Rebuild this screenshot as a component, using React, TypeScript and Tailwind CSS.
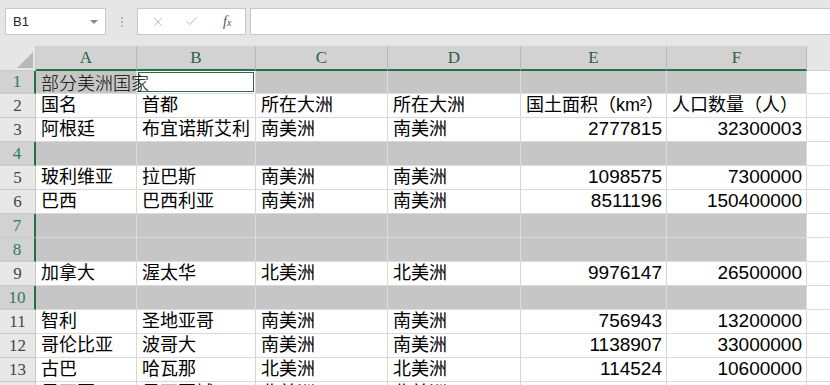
import { X, Check } from "lucide-react";

const cols = [
  { key: "A", w: "w-[101px]" },
  { key: "B", w: "w-[119px]" },
  { key: "C", w: "w-[132px]" },
  { key: "D", w: "w-[133px]" },
  { key: "E", w: "w-[146px]" },
  { key: "F", w: "w-[140px]" },
];

type Row = { n: number; sel?: boolean; cells?: string[] };

const rows: Row[] = [
  { n: 2, cells: ["国名", "首都", "所在大洲", "所在大洲", "国土面积（km²）", "人口数量（人）"] },
  { n: 3, cells: ["阿根廷", "布宜诺斯艾利", "南美洲", "南美洲", "2777815", "32300003"] },
  { n: 4, sel: true },
  { n: 5, cells: ["玻利维亚", "拉巴斯", "南美洲", "南美洲", "1098575", "7300000"] },
  { n: 6, cells: ["巴西", "巴西利亚", "南美洲", "南美洲", "8511196", "150400000"] },
  { n: 7, sel: true },
  { n: 8, sel: true },
  { n: 9, cells: ["加拿大", "渥太华", "北美洲", "北美洲", "9976147", "26500000"] },
  { n: 10, sel: true },
  { n: 11, cells: ["智利", "圣地亚哥", "南美洲", "南美洲", "756943", "13200000"] },
  { n: 12, cells: ["哥伦比亚", "波哥大", "南美洲", "南美洲", "1138907", "33000000"] },
  { n: 13, cells: ["古巴", "哈瓦那", "北美洲", "北美洲", "114524", "10600000"] },
  { n: 14, cells: ["墨西哥", "墨西哥城", "北美洲", "北美洲", "1964375", "119500000"] },
];

const isNum = (s: string) => /^\d+$/.test(s);

const RowHeader = ({ n, sel }: { n: number; sel?: boolean }) => (
  <div
    className={
      "w-[36px] shrink-0 flex items-center justify-center border-b border-[#c8c8c8] font-['Liberation_Serif',serif] text-[17px] " +
      (sel
        ? "bg-[#d2d2d2] text-[#2f7a5a] border-r-2 border-r-[#217346]"
        : "bg-[#e8e8e8] text-[#444] border-r border-r-[#c8c8c8]")
    }
  >
    {n}
  </div>
);

const Toolbar = () => (
  <div className="h-[46px] bg-[#e6e6e6] flex items-start pt-[8px] pl-[5px]">
    <div className="w-[101px] h-[27px] bg-white border border-[#c6c6c6] flex items-center justify-between px-[7px] font-['Liberation_Sans',sans-serif] text-[13px] text-[#222]">
      <span>B1</span>
      <span className="w-0 h-0 border-l-[4px] border-r-[4px] border-t-[4px] border-l-transparent border-r-transparent border-t-[#888]" />
    </div>
    <div className="w-[31px] h-[27px] flex flex-col items-center justify-center gap-[2px]">
      <span className="w-[2px] h-[2px] bg-[#b4b4b4]" />
      <span className="w-[2px] h-[2px] bg-[#b4b4b4]" />
      <span className="w-[2px] h-[2px] bg-[#b4b4b4]" />
    </div>
    <div className="w-[109px] h-[27px] bg-white border border-[#c6c6c6] flex items-center pl-[13px]">
      <X className="w-[14px] h-[14px] text-[#b0b0b0]" strokeWidth={1.5} />
      <Check className="w-[15px] h-[15px] text-[#b0b0b0] ml-[19px]" strokeWidth={1.5} />
      <span className="ml-[24px] font-['Liberation_Serif',serif] italic text-[14px] text-[#555] leading-none">
        f<span className="text-[10px]">x</span>
      </span>
    </div>
    <div className="ml-[4px] flex-1 h-[27px] bg-white border border-[#c6c6c6] border-r-0" />
  </div>
);

const HeaderRow = () => (
  <div className="flex h-[25px]">
    <div className="w-[36px] shrink-0 bg-[#e6e6e6] border-r border-b border-[#c8c8c8] flex items-end justify-end p-[2px]">
      <span className="w-0 h-0 border-l-[16px] border-l-transparent [border-bottom:16px_solid_#b8b8b8]" />
    </div>
    {cols.map((c) => (
      <div
        key={c.key}
        className={
          c.w +
          " shrink-0 bg-[#d2d2d2] border-r border-r-[#b8b8b8] border-b-2 border-b-[#217346] flex items-center justify-center font-['Liberation_Serif',serif] text-[17px] text-[#2e5e46]"
        }
      >
        {c.key}
      </div>
    ))}
    <div className="flex-1 bg-[#e6e6e6] border-b border-[#d0d0d0]" />
  </div>
);

const cellFont = "font-['Liberation_Sans','Noto_Sans_CJK_SC',sans-serif] text-[18px] text-black";

const BandRow = ({ n }: { n: number }) => (
  <div className="flex h-[24px]">
    <RowHeader n={n} sel />
    {cols.map((c) => (
      <div key={c.key} className={c.w + " shrink-0 bg-[#c6c6c6] border-r border-b border-[#dcdcdc]"} />
    ))}
    <div className="flex-1 bg-white border-b border-[#dcdcdc]" />
  </div>
);

const DataRow = ({ n, cells }: { n: number; cells: string[] }) => (
  <div className="flex h-[24px]">
    <RowHeader n={n} />
    {cols.map((c, i) => (
      <div
        key={c.key}
        className={
          c.w +
          " shrink-0 bg-white border-r border-b border-[#d8d8d8] flex items-center overflow-hidden whitespace-nowrap " +
          cellFont +
          (isNum(cells[i]) ? " justify-end pr-[4px] text-[19px]" : " pl-[5px]")
        }
      >
        {cells[i]}
      </div>
    ))}
    <div className="flex-1 bg-white border-b border-[#d8d8d8]" />
  </div>
);

const FirstRow = () => (
  <div className="flex h-[23px]">
    <RowHeader n={1} sel />
    <div className="w-[101px] shrink-0 bg-[#c6c6c6] border-r border-b border-[#dcdcdc] relative z-10 flex items-center pl-[5px] whitespace-nowrap font-['Noto_Sans_CJK_SC',sans-serif] font-light text-[18px] text-black">
      部分美洲国家
    </div>
    <div className="w-[119px] shrink-0 bg-white border-r border-b border-[#dcdcdc] p-[1px]">
      <div className="w-full h-full border border-[#2b6a4a]" />
    </div>
    {cols.slice(2).map((c) => (
      <div key={c.key} className={c.w + " shrink-0 bg-[#c6c6c6] border-r border-b border-[#dcdcdc]"} />
    ))}
    <div className="flex-1 bg-white border-b border-[#dcdcdc]" />
  </div>
);

export default function App() {
  return (
    <div className="w-[830px] h-[385px] overflow-hidden bg-white">
      <Toolbar />
      <HeaderRow />
      <FirstRow />
      {rows.map((r) =>
        r.sel ? <BandRow key={r.n} n={r.n} /> : <DataRow key={r.n} n={r.n} cells={r.cells!} />
      )}
    </div>
  );
}
